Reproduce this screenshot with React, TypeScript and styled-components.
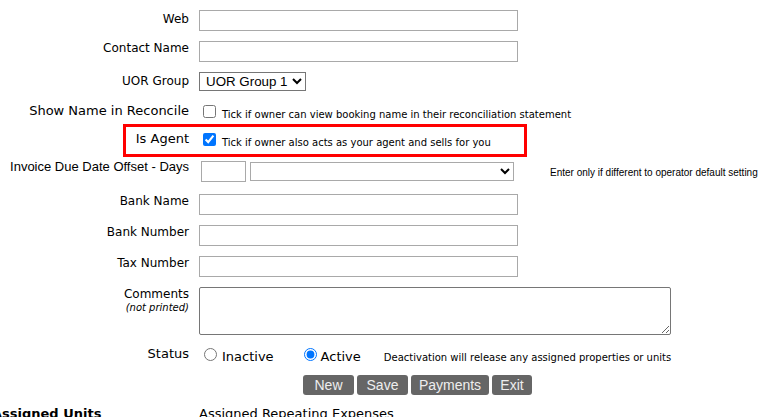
import React from "react";
import styled, { createGlobalStyle } from "styled-components";

const GlobalStyle = createGlobalStyle`
  html, body {
    margin: 0;
    padding: 0;
    background: #ffffff;
  }
  body {
    font-family: "DejaVu Sans", Verdana, sans-serif;
    color: #000000;
  }
`;

const Page = styled.div`
  position: relative;
  width: 772px;
  height: 417px;
  overflow: hidden;
  padding-top: 10px;
  box-sizing: border-box;
`;

const Row = styled.div<{ $h: number }>`
  position: relative;
  display: grid;
  grid-template-columns: 189px 1fr;
  column-gap: 10px;
  align-items: start;
  height: ${(p) => p.$h}px;
`;

/* Field captions: most are small Verdana-style text, a few are a size up,
   and the invoice offset caption uses the Arial face. */
const Label = styled.div<{ $dy?: number; $arial?: boolean; $large?: boolean }>`
  margin-top: ${(p) => p.$dy ?? 0}px;
  text-align: right;
  white-space: nowrap;
  font-family: ${(p) =>
    p.$arial ? '"Liberation Sans", Arial, sans-serif' : '"DejaVu Sans", Verdana, sans-serif'};
  font-size: ${(p) => (p.$arial || p.$large ? 13 : 12)}px;
  line-height: 15px;
`;

const SubLabel = styled.div`
  font-size: 10px;
  line-height: 12px;
  font-style: italic;
`;

const Field = styled.div`
  display: flex;
  align-items: flex-start;
  min-width: 0;
`;

const TextInput = styled.input<{ $w: number; $ml?: number }>`
  box-sizing: border-box;
  width: ${(p) => p.$w}px;
  height: 21px;
  margin: 0 0 0 ${(p) => p.$ml ?? 0}px;
  padding: 1px 3px;
  border: 1px solid #a9a9a9;
  border-radius: 0;
  background: #fff;
  font-family: "Liberation Sans", Arial, sans-serif;
  font-size: 13px;
`;

const Select = styled.select<{ $w: number; $light?: boolean; $ml?: number; $mt?: number }>`
  box-sizing: border-box;
  width: ${(p) => p.$w}px;
  height: 19px;
  margin: ${(p) => p.$mt ?? 0}px 0 0 ${(p) => p.$ml ?? 0}px;
  padding: 0 0 0 2px;
  border: 1px solid ${(p) => (p.$light ? "#a9a9a9" : "#767676")};
  border-radius: 0;
  background: #fff;
  color: #000;
  font-family: "Liberation Sans", Arial, sans-serif;
  font-size: 13.33px;
`;

const TextArea = styled.textarea`
  box-sizing: border-box;
  width: 472px;
  height: 48px;
  margin: 0;
  border: 1px solid #767676;
  border-radius: 2px;
  font-family: "Liberation Mono", monospace;
  font-size: 13px;
`;

const CheckLine = styled.label`
  display: block;
  white-space: nowrap;
  font-size: 10px;
  line-height: 13px;
`;

const Check = styled.input`
  width: 13px;
  height: 13px;
  margin: 0 6px 0 4px;
  vertical-align: baseline;
  accent-color: #0075ff;
`;

const Hint = styled.span`
  font-size: 10px;
`;

const Note = styled.div<{ $ml: number; $mt: number }>`
  margin: ${(p) => p.$mt}px 0 0 ${(p) => p.$ml}px;
  white-space: nowrap;
  font-family: "Liberation Sans", Arial, sans-serif;
  font-size: 10px;
  line-height: 12px;
`;

const RadioLine = styled.div`
  white-space: nowrap;
  font-size: 13px;
  line-height: 13px;
`;

const RadioOption = styled.label<{ $mr: number }>`
  margin-right: ${(p) => p.$mr}px;
`;

const Radio = styled.input<{ $gap: number }>`
  width: 13px;
  height: 13px;
  margin: 0 ${(p) => p.$gap}px 0 5px;
  vertical-align: baseline;
  accent-color: #0075ff;
`;

const RadioNote = styled.span`
  font-size: 10px;
`;

/* Red review marker drawn over the "Is Agent" row */
const Highlight = styled.div`
  position: absolute;
  left: 123px;
  top: -9px;
  width: 404px;
  height: 33px;
  box-sizing: border-box;
  border: 3px solid #ff0000;
  pointer-events: none;
`;

const ButtonBar = styled.div`
  display: flex;
  gap: 3px;
  margin: 2px 0 0 104px;
`;

const Button = styled.button<{ $w: number }>`
  box-sizing: border-box;
  width: ${(p) => p.$w}px;
  height: 20px;
  padding: 0;
  border: none;
  border-radius: 3px;
  background: #666666;
  color: #eeeeee;
  font-family: "Liberation Sans", Arial, sans-serif;
  font-size: 14px;
  line-height: 20px;
  cursor: pointer;
`;

const Sections = styled.div`
  display: grid;
  grid-template-columns: 189px 1fr;
  column-gap: 10px;
  margin-top: 11px;
`;

const SectionTitle = styled.div<{ $bold?: boolean; $ml?: number }>`
  margin-left: ${(p) => p.$ml ?? 0}px;
  white-space: nowrap;
  font-size: 13px;
  font-weight: ${(p) => (p.$bold ? 700 : 400)};
  line-height: 15px;
`;

export default function App() {
  return (
    <Page>
      <GlobalStyle />

      <Row $h={31}>
        <Label $dy={2}>Web</Label>
        <Field>
          <TextInput $w={319} type="text" />
        </Field>
      </Row>

      <Row $h={31}>
        <Label $dy={0}>Contact Name</Label>
        <Field>
          <TextInput $w={319} type="text" />
        </Field>
      </Row>

      <Row $h={33}>
        <Label $dy={2}>UOR Group</Label>
        <Field>
          <Select $w={107} defaultValue="1">
            <option value="1">UOR Group 1</option>
          </Select>
        </Field>
      </Row>

      <Row $h={28}>
        <Label $dy={-2} $large>
          Show Name in Reconcile
        </Label>
        <CheckLine>
          <Check type="checkbox" />
          <Hint>Tick if owner can view booking name in their reconciliation statement</Hint>
        </CheckLine>
      </Row>

      <Row $h={28}>
        <Highlight />
        <Label $dy={-2} $large>
          Is Agent
        </Label>
        <CheckLine>
          <Check type="checkbox" defaultChecked />
          <Hint>Tick if owner also acts as your agent and sells for you</Hint>
        </CheckLine>
      </Row>

      <Row $h={33}>
        <Label $dy={-2} $arial>
          Invoice Due Date Offset - Days
        </Label>
        <Field>
          <TextInput $w={45} $ml={2} type="text" />
          <Select $w={264} $ml={4} $mt={1} $light defaultValue="">
            <option value=""></option>
          </Select>
          <Note $ml={36} $mt={6}>
            Enter only if different to operator default setting
          </Note>
        </Field>
      </Row>

      <Row $h={31}>
        <Label $dy={0}>Bank Name</Label>
        <Field>
          <TextInput $w={319} type="text" />
        </Field>
      </Row>

      <Row $h={31}>
        <Label $dy={0}>Bank Number</Label>
        <Field>
          <TextInput $w={319} type="text" />
        </Field>
      </Row>

      <Row $h={31}>
        <Label $dy={0}>Tax Number</Label>
        <Field>
          <TextInput $w={319} type="text" />
        </Field>
      </Row>

      <Row $h={61}>
        <Label $dy={0}>
          Comments
          <SubLabel>(not printed)</SubLabel>
        </Label>
        <Field>
          <TextArea />
        </Field>
      </Row>

      <Row $h={25}>
        <Label $dy={-2} $large>
          Status
        </Label>
        <RadioLine>
          <RadioOption $mr={25}>
            <Radio $gap={5} type="radio" name="status" />
            Inactive
          </RadioOption>
          <RadioOption $mr={23}>
            <Radio $gap={4} type="radio" name="status" defaultChecked />
            Active
          </RadioOption>
          <RadioNote>Deactivation will release any assigned properties or units</RadioNote>
        </RadioLine>
      </Row>

      <Row $h={22}>
        <span />
        <ButtonBar>
          <Button $w={51}>New</Button>
          <Button $w={51}>Save</Button>
          <Button $w={78}>Payments</Button>
          <Button $w={40}>Exit</Button>
        </ButtonBar>
      </Row>

      <Sections>
        <SectionTitle $bold $ml={-8}>
          Assigned Units
        </SectionTitle>
        <SectionTitle>Assigned Repeating Expenses</SectionTitle>
      </Sections>
    </Page>
  );
}
